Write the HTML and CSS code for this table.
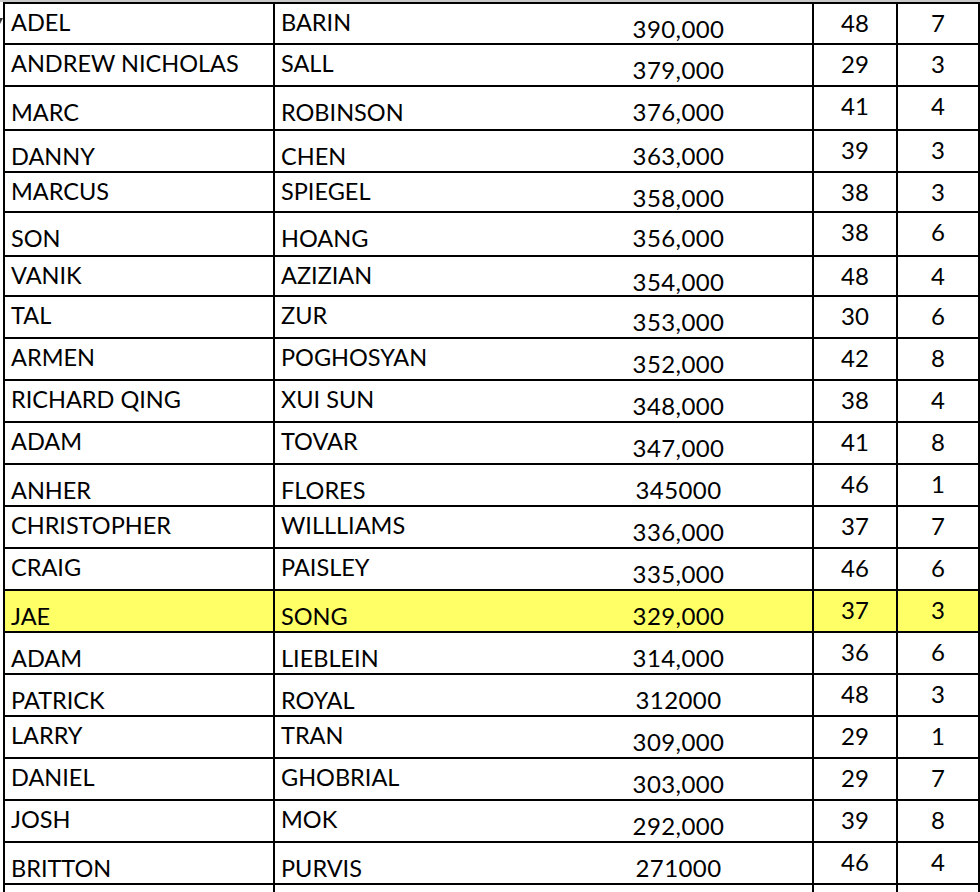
FILE: index.html
```html
<!DOCTYPE html>
<html>
<head>
<meta charset="utf-8">
<link rel="stylesheet" href="styles.css">
</head>
<body>
<div class="sheet">
  <div class="gutter">
    <svg class="mark" width="6" height="10" viewBox="0 0 6 10"><path d="M0 2 L6 2 L3 8 Z" fill="#333"/></svg>
  </div>
  <table class="grid">
    <colgroup>
      <col class="c1"><col class="c2"><col class="c3"><col class="c4"><col class="c5">
    </colgroup>
    <tbody>
      <tr class="h41 t"><td>ADEL</td><td>BARIN</td><td class="num">390,000</td><td class="age">48</td><td class="age">7</td></tr>
      <tr class="h42 t"><td>ANDREW NICHOLAS</td><td>SALL</td><td class="num">379,000</td><td class="age">29</td><td class="age">3</td></tr>
      <tr class="h44 b"><td>MARC</td><td>ROBINSON</td><td class="num">376,000</td><td class="age">41</td><td class="age">4</td></tr>
      <tr class="h42 b"><td>DANNY</td><td>CHEN</td><td class="num">363,000</td><td class="age">39</td><td class="age">3</td></tr>
      <tr class="h40 t"><td>MARCUS</td><td>SPIEGEL</td><td class="num">358,000</td><td class="age">38</td><td class="age">3</td></tr>
      <tr class="h44 b"><td>SON</td><td>HOANG</td><td class="num">356,000</td><td class="age">38</td><td class="age">6</td></tr>
      <tr class="h40 t"><td>VANIK</td><td>AZIZIAN</td><td class="num">354,000</td><td class="age">48</td><td class="age">4</td></tr>
      <tr class="h42 t"><td>TAL</td><td>ZUR</td><td class="num">353,000</td><td class="age">30</td><td class="age">6</td></tr>
      <tr class="h42 t"><td>ARMEN</td><td>POGHOSYAN</td><td class="num">352,000</td><td class="age">42</td><td class="age">8</td></tr>
      <tr class="h42 t"><td>RICHARD QING</td><td>XUI SUN</td><td class="num">348,000</td><td class="age">38</td><td class="age">4</td></tr>
      <tr class="h42 t"><td>ADAM</td><td>TOVAR</td><td class="num">347,000</td><td class="age">41</td><td class="age">8</td></tr>
      <tr class="h42 b"><td>ANHER</td><td>FLORES</td><td class="num">345000</td><td class="age">46</td><td class="age">1</td></tr>
      <tr class="h42 t"><td>CHRISTOPHER</td><td>WILLLIAMS</td><td class="num">336,000</td><td class="age">37</td><td class="age">7</td></tr>
      <tr class="h42 t"><td>CRAIG</td><td>PAISLEY</td><td class="num">335,000</td><td class="age">46</td><td class="age">6</td></tr>
      <tr class="h42 b hl"><td>JAE</td><td>SONG</td><td class="num">329,000</td><td class="age">37</td><td class="age">3</td></tr>
      <tr class="h42 b"><td>ADAM</td><td>LIEBLEIN</td><td class="num">314,000</td><td class="age">36</td><td class="age">6</td></tr>
      <tr class="h42 b"><td>PATRICK</td><td>ROYAL</td><td class="num">312000</td><td class="age">48</td><td class="age">3</td></tr>
      <tr class="h42 t"><td>LARRY</td><td>TRAN</td><td class="num">309,000</td><td class="age">29</td><td class="age">1</td></tr>
      <tr class="h42 t"><td>DANIEL</td><td>GHOBRIAL</td><td class="num">303,000</td><td class="age">29</td><td class="age">7</td></tr>
      <tr class="h42 t"><td>JOSH</td><td>MOK</td><td class="num">292,000</td><td class="age">39</td><td class="age">8</td></tr>
      <tr class="h42 b"><td>BRITTON</td><td>PURVIS</td><td class="num">271000</td><td class="age">46</td><td class="age">4</td></tr>
      <tr class="h42 t"><td>&nbsp;</td><td>&nbsp;</td><td class="num">&nbsp;</td><td class="age">&nbsp;</td><td class="age">&nbsp;</td></tr>
    </tbody>
  </table>
</div>
</body>
</html>
```
FILE: styles.css
```css
html, body {
  margin: 0;
  padding: 0;
  background: #fff;
  overflow: hidden;
}

.sheet {
  display: flex;
  align-items: flex-start;
  border-top: 2px solid #c9c9c9;
  width: 980px;
  height: 890px;
  overflow: hidden;
}

.gutter {
  width: 3px;
  flex: none;
  height: 890px;
  position: relative;
  overflow: hidden;
}

.mark {
  position: absolute;
  left: -3px;
  top: 14px;
}

.grid {
  border-collapse: collapse;
  table-layout: fixed;
  width: 977px;
  flex: none;
  font-family: Lato, "Liberation Sans", sans-serif;
  font-size: 23.5px;
  line-height: 24px;
  color: #000;
}

.c1 { width: 270px; }
.c2 { width: 271px; }
.c3 { width: 268px; }
.c4 { width: 84px; }
.c5 { width: 82px; }

.grid td {
  border: 2px solid #000;
  vertical-align: top;
  padding: 0 0 0 6px;
  white-space: nowrap;
  overflow: hidden;
}

.grid td:nth-child(2) {
  border-right: none;
}

.grid td:nth-child(3) {
  border-left: none;
}

.h40 { height: 40px; }
.h41 { height: 41px; }
.h42 { height: 42px; }
.h44 { height: 44px; }

.t td { padding-top: 6px; }
.b td { padding-top: 13px; }

.grid td.num {
  padding: 13px 0 0 0;
  text-align: center;
  font-size: 24px;
  letter-spacing: 0.4px;
}

.grid td.age {
  padding: 7px 0 0 0;
  text-align: center;
  font-size: 24px;
}

.hl td { background: #ffff66; }
```
